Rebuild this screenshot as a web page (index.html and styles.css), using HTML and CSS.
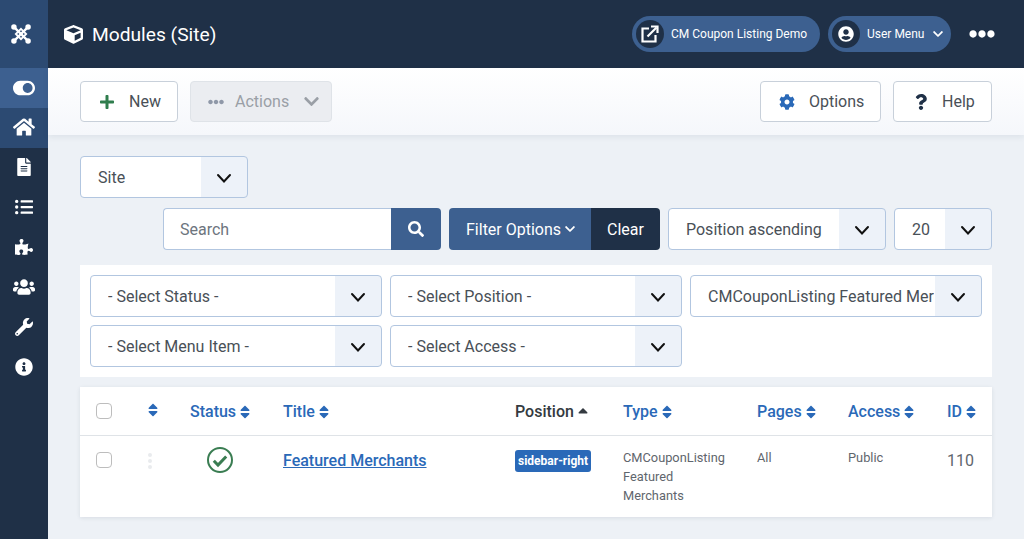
FILE: index.html
```html
<!DOCTYPE html>
<html lang="en">
<head>
  <meta charset="UTF-8">
  <title>Modules (Site)</title>
  <link rel="stylesheet" href="styles.css">
</head>
<body>
  <svg class="sprites" aria-hidden="true">
    <symbol id="i-toggle" viewBox="0 0 576 512"><path d="M384 64H192C86 64 0 150 0 256s86 192 192 192h192c106 0 192-86 192-192S490 64 384 64zm0 320c-70.8 0-128-57.3-128-128 0-70.8 57.3-128 128-128 70.8 0 128 57.3 128 128 0 70.8-57.3 128-128 128z"/></symbol>
    <symbol id="i-home" viewBox="0 0 576 512"><path d="M280.37 148.26L96 300.11V464a16 16 0 0 0 16 16l112.06-.29a16 16 0 0 0 15.92-16V368a16 16 0 0 1 16-16h64a16 16 0 0 1 16 16v95.64a16 16 0 0 0 16 16.05L464 480a16 16 0 0 0 16-16V300L295.67 148.26a12.19 12.19 0 0 0-15.3 0zM571.6 251.47L488 182.56V44.05a12 12 0 0 0-12-12h-56a12 12 0 0 0-12 12v72.61L318.47 43a48 48 0 0 0-61 0L4.34 251.47a12 12 0 0 0-1.6 16.9l25.5 31A12 12 0 0 0 45.15 301l235.22-193.74a12.19 12.19 0 0 1 15.3 0L530.9 301a12 12 0 0 0 16.9-1.6l25.5-31a12 12 0 0 0-1.7-16.93z"/></symbol>
    <symbol id="i-file" viewBox="0 0 384 512"><path d="M224 136V0H24C10.7 0 0 10.7 0 24v464c0 13.3 10.7 24 24 24h336c13.3 0 24-10.7 24-24V160H248c-13.2 0-24-10.8-24-24zm64 236c0 6.6-5.4 12-12 12H108c-6.6 0-12-5.4-12-12v-8c0-6.6 5.4-12 12-12h168c6.6 0 12 5.4 12 12v8zm0-64c0 6.6-5.4 12-12 12H108c-6.6 0-12-5.4-12-12v-8c0-6.6 5.4-12 12-12h168c6.6 0 12 5.4 12 12v8zm0-72v8c0 6.6-5.4 12-12 12H108c-6.6 0-12-5.4-12-12v-8c0-6.6 5.4-12 12-12h168c6.6 0 12 5.4 12 12zm96-114.1v6.1H256V0h6.1c6.4 0 12.5 2.5 17 7l97.9 98c4.5 4.5 7 10.6 7 16.9z"/></symbol>
    <symbol id="i-list" viewBox="0 0 512 512"><path d="M48 48a48 48 0 1 0 48 48 48 48 0 0 0-48-48zm0 160a48 48 0 1 0 48 48 48 48 0 0 0-48-48zm0 160a48 48 0 1 0 48 48 48 48 0 0 0-48-48zm448 16H176a16 16 0 0 0-16 16v32a16 16 0 0 0 16 16h320a16 16 0 0 0 16-16v-32a16 16 0 0 0-16-16zm0-320H176a16 16 0 0 0-16 16v32a16 16 0 0 0 16 16h320a16 16 0 0 0 16-16V80a16 16 0 0 0-16-16zm0 160H176a16 16 0 0 0-16 16v32a16 16 0 0 0 16 16h320a16 16 0 0 0 16-16v-32a16 16 0 0 0-16-16z"/></symbol>
    <symbol id="i-puzzle" viewBox="0 0 576 512"><path d="M519.442 288.651c-41.519 0-59.5 31.593-82.058 31.593C377.409 320.244 432 144 432 144s-196.288 80-196.288-3.297c0-35.827 36.288-46.25 36.288-85.985C272 19.216 243.885 0 210.539 0c-34.654 0-66.366 18.891-66.366 56.346 0 41.364 31.711 59.277 31.711 81.75C175.885 207.719 0 166.758 0 166.758v333.237s178.635 41.047 178.635-28.662c0-22.473-40-40.107-40-81.471 0-37.456 29.25-56.346 63.577-56.346 33.673 0 61.788 19.216 61.788 54.717 0 39.735-36.288 50.158-36.288 85.985 0 60.803 129.675 25.73 181.23 25.73 0 0-34.725-120.101 25.827-120.101 35.962 0 46.423 36.152 86.308 36.152C556.712 416 576 387.99 576 354.443c0-34.199-18.962-65.792-56.558-65.792z"/></symbol>
    <symbol id="i-users" viewBox="0 0 640 512"><path d="M96 224c35.3 0 64-28.7 64-64s-28.7-64-64-64-64 28.7-64 64 28.7 64 64 64zm448 0c35.3 0 64-28.7 64-64s-28.7-64-64-64-64 28.7-64 64 28.7 64 64 64zm32 32h-64c-17.6 0-33.5 7.1-45.1 18.6 40.3 22.1 68.9 62 75.1 109.4h66c17.7 0 32-14.3 32-32v-32c0-35.3-28.7-64-64-64zm-256 0c61.9 0 112-50.1 112-112S381.9 32 320 32 208 82.1 208 144s50.1 112 112 112zm76.8 32h-8.3c-20.8 10-43.9 16-68.5 16s-47.6-6-68.5-16h-8.3C179.6 288 128 339.6 128 403.2V432c0 26.5 21.5 48 48 48h288c26.5 0 48-21.5 48-48v-28.8c0-63.6-51.6-115.2-115.2-115.2zm-223.7-13.4C161.5 263.1 145.6 256 128 256H64c-35.3 0-64 28.7-64 64v32c0 17.7 14.3 32 32 32h65.9c6.3-47.4 34.9-87.3 75.2-109.4z"/></symbol>
    <symbol id="i-wrench" viewBox="0 0 512 512"><path d="M507.73 109.1c-2.24-9.03-13.54-12.09-20.12-5.51l-74.36 74.36-67.88-11.31-11.31-67.88 74.36-74.36c6.62-6.62 3.43-17.9-5.66-20.16-47.38-11.74-99.55.91-136.58 37.93-39.64 39.64-50.55 97.1-34.05 147.2L18.74 402.76c-24.99 24.99-24.99 65.51 0 90.5 24.99 24.99 65.51 24.99 90.5 0l213.21-213.21c50.12 16.71 107.47 5.68 147.37-34.22 37.07-37.07 49.7-89.32 37.91-136.73zM64 472c-13.25 0-24-10.75-24-24 0-13.26 10.75-24 24-24s24 10.74 24 24c0 13.25-10.75 24-24 24z"/></symbol>
    <symbol id="i-info" viewBox="0 0 512 512"><path d="M256 8C119.043 8 8 119.083 8 256c0 136.997 111.043 248 248 248s248-111.003 248-248C504 119.083 392.957 8 256 8zm0 110c23.196 0 42 18.804 42 42s-18.804 42-42 42-42-18.804-42-42 18.804-42 42-42zm56 254c0 6.627-5.373 12-12 12h-88c-6.627 0-12-5.373-12-12v-24c0-6.627 5.373-12 12-12h12v-64h-12c-6.627 0-12-5.373-12-12v-24c0-6.627 5.373-12 12-12h64c6.627 0 12 5.373 12 12v100h12c6.627 0 12 5.373 12 12v24z"/></symbol>
    <symbol id="i-cube" viewBox="0 0 512 512"><path d="M239.1 6.3l-208 78c-18.7 7-31.1 25-31.1 45v225.1c0 18.2 10.3 34.8 26.5 42.9l208 104c13.5 6.8 29.4 6.8 42.9 0l208-104c16.3-8.1 26.5-24.8 26.5-42.9V129.3c0-20-12.4-37.9-31.1-44.9l-208-78C262 2.2 250 2.2 239.1 6.3zM256 68.4l192 72v1.1l-192 78-192-78v-1.1l192-72zm32 356V275.5l160-65v133.9l-160 80z"/></symbol>
    <symbol id="i-user" viewBox="0 0 496 512"><path d="M248 8C111 8 0 119 0 256s111 248 248 248 248-111 248-248S385 8 248 8zm0 96c48.6 0 88 39.4 88 88s-39.4 88-88 88-88-39.4-88-88 39.4-88 88-88zm0 344c-58.7 0-111.3-26.6-146.5-68.2 18.8-35.4 55.6-59.8 98.5-59.8 2.4 0 4.8.4 7.1 1.1 13 4.2 26.6 6.9 40.9 6.9 14.3 0 28-2.7 40.9-6.9 2.3-.7 4.7-1.1 7.1-1.1 42.9 0 79.7 24.4 98.5 59.8C359.3 421.4 306.7 448 248 448z"/></symbol>
    <symbol id="i-dots" viewBox="0 0 512 512"><path d="M328 256c0 39.8-32.2 72-72 72s-72-32.2-72-72 32.2-72 72-72 72 32.2 72 72zm104-72c-39.8 0-72 32.2-72 72s32.2 72 72 72 72-32.2 72-72-32.2-72-72-72zm-352 0c-39.8 0-72 32.2-72 72s32.2 72 72 72 72-32.2 72-72-32.2-72-72-72z"/></symbol>
    <symbol id="i-plus" viewBox="0 0 448 512"><path d="M416 208H272V64c0-17.67-14.33-32-32-32h-32c-17.67 0-32 14.33-32 32v144H32c-17.67 0-32 14.33-32 32v32c0 17.67 14.33 32 32 32h144v144c0 17.67 14.33 32 32 32h32c17.67 0 32-14.33 32-32V304h144c17.67 0 32-14.33 32-32v-32c0-17.67-14.33-32-32-32z"/></symbol>
    <symbol id="i-cog" viewBox="0 0 512 512"><path d="M487.4 315.7l-42.6-24.6c4.3-23.2 4.3-47 0-70.2l42.6-24.6c4.9-2.8 7.1-8.6 5.5-14-11.1-35.6-30-67.8-54.7-94.6-3.8-4.1-10-5.1-14.8-2.3L380.8 110c-17.9-15.4-38.5-27.3-60.8-35.1V25.8c0-5.6-3.9-10.5-9.4-11.7-36.7-8.2-74.3-7.8-109.2 0-5.5 1.2-9.4 6.1-9.4 11.7V75c-22.2 7.9-42.8 19.8-60.8 35.1L88.7 85.5c-4.9-2.8-11-1.9-14.8 2.3-24.7 26.7-43.6 58.9-54.7 94.6-1.7 5.4.6 11.2 5.5 14L67.3 221c-4.3 23.2-4.3 47 0 70.2l-42.6 24.6c-4.9 2.8-7.1 8.6-5.5 14 11.1 35.6 30 67.8 54.7 94.6 3.8 4.1 10 5.1 14.8 2.3l42.6-24.6c17.9 15.4 38.5 27.3 60.8 35.1v49.2c0 5.6 3.9 10.5 9.4 11.7 36.7 8.2 74.3 7.8 109.2 0 5.5-1.2 9.4-6.1 9.4-11.7v-49.2c22.2-7.9 42.8-19.8 60.8-35.1l42.6 24.6c4.9 2.8 11 1.9 14.8-2.3 24.7-26.7 43.6-58.9 54.7-94.6 1.5-5.5-.7-11.3-5.6-14.1zM256 336c-44.1 0-80-35.9-80-80s35.9-80 80-80 80 35.9 80 80-35.9 80-80 80z"/></symbol>
    <symbol id="i-question" viewBox="0 0 384 512"><path d="M202.021 0C122.202 0 70.503 32.703 29.914 91.026c-7.363 10.58-5.093 25.086 5.178 32.874l43.138 32.709c10.373 7.865 25.132 6.026 33.253-4.148 25.049-31.381 43.63-49.449 82.757-49.449 30.764 0 68.816 19.799 68.816 49.631 0 22.552-18.617 34.134-48.993 51.164-35.423 19.86-82.299 44.576-82.299 106.405V320c0 13.255 10.745 24 24 24h72.471c13.255 0 24-10.745 24-24v-5.773c0-42.86 125.268-44.645 125.268-160.627C377.504 66.256 286.902 0 202.021 0zM192 373.459c-38.196 0-69.271 31.075-69.271 69.271 0 38.195 31.075 69.27 69.271 69.27s69.271-31.075 69.271-69.271-31.075-69.27-69.271-69.27z"/></symbol>
    <symbol id="i-search" viewBox="0 0 512 512"><path d="M505 442.7L405.3 343c-4.5-4.5-10.6-7-17-7H372c27.6-35.3 44-79.7 44-128C416 93.1 322.9 0 208 0S0 93.1 0 208s93.1 208 208 208c48.3 0 92.7-16.4 128-44v16.3c0 6.4 2.5 12.5 7 17l99.7 99.7c9.4 9.4 24.6 9.4 33.9 0l28.3-28.3c9.4-9.4 9.4-24.6.1-34zM208 336c-70.7 0-128-57.2-128-128 0-70.7 57.2-128 128-128 70.7 0 128 57.2 128 128 0 70.7-57.2 128-128 128z"/></symbol>
    <symbol id="i-chevron" viewBox="0 0 448 512"><path d="M207.029 381.476L12.686 187.132c-9.373-9.373-9.373-24.569 0-33.941l22.667-22.667c9.357-9.357 24.522-9.375 33.901-.04L224 284.505l154.745-154.021c9.379-9.335 24.544-9.317 33.901.04l22.667 22.667c9.373 9.373 9.373 24.569 0 33.941L240.971 381.476c-9.373 9.372-24.569 9.372-33.942 0z"/></symbol>
    <symbol id="i-caret" viewBox="0 0 16 18"><path d="M2 6 8 12.500 14 6" fill="none" stroke="currentColor" stroke-width="2" stroke-linecap="round"/></symbol>
    <symbol id="i-sort" viewBox="0 0 320 512"><path d="M41 288h238c21.4 0 32.1 25.9 17 41L177 448c-9.4 9.4-24.6 9.4-33.9 0L24 329c-15.1-15.1-4.4-41 17-41zm255-105L177 64c-9.4-9.4-24.6-9.4-33.9 0L24 183c-15.1 15.1-4.4 41 17 41h238c21.4 0 32.1-25.9 17-41z"/></symbol>
    <symbol id="i-sortup" viewBox="0 -112 320 512"><path d="M296 183L177 64c-9.4-9.4-24.6-9.4-33.9 0L24 183c-15.1 15.1-4.4 41 17 41h238c21.4 0 32.1-25.9 17-41z"/></symbol>
  </svg>

  <aside class="sidebar">
    <a class="brand" href="#">
      <svg class="brand-logo line-icon" viewBox="0 0 24 24" stroke="#fff">
        <path d="M4 4 20 20M20 4 4 20" stroke-width="2.800"/>
        <path d="M12 5.800 18.200 12 12 18.200 5.800 12z" stroke-width="2.200"/>
        <g fill="#fff" stroke="none">
          <circle cx="3.500" cy="3.500" r="3.300"/><circle cx="20.500" cy="3.500" r="3.300"/>
          <circle cx="3.500" cy="20.500" r="3.300"/><circle cx="20.500" cy="20.500" r="3.300"/>
        </g>
      </svg>
    </a>
    <nav class="side-nav">
      <a class="side-item toggle" href="#"><svg class="side-icon wide"><use href="#i-toggle"/></svg></a>
      <a class="side-item home" href="#"><svg class="side-icon wide"><use href="#i-home"/></svg></a>
      <a class="side-item" href="#"><svg class="side-icon"><use href="#i-file"/></svg></a>
      <a class="side-item" href="#"><svg class="side-icon"><use href="#i-list"/></svg></a>
      <a class="side-item" href="#"><svg class="side-icon"><use href="#i-puzzle"/></svg></a>
      <a class="side-item" href="#"><svg class="side-icon wide"><use href="#i-users"/></svg></a>
      <a class="side-item" href="#"><svg class="side-icon"><use href="#i-wrench"/></svg></a>
      <a class="side-item" href="#"><svg class="side-icon"><use href="#i-info"/></svg></a>
    </nav>
  </aside>

  <div class="page">
    <header class="topbar">
      <svg class="title-icon"><use href="#i-cube"/></svg>
      <h1 class="title">Modules (Site)</h1>
      <div class="pills">
        <a class="pill site-pill" href="#">
          <span class="pill-circle">
            <svg class="ext-icon line-icon" viewBox="0 0 18 18" stroke="#fff" stroke-width="2.200">
              <path d="M8 3.500H1.500V16.500H14.500V10"/>
              <path d="M6.500 11.500 15.500 2.500"/>
              <path d="M10 1.500h6.500v6.500"/>
            </svg>
          </span>
          <span>CM Coupon Listing Demo</span>
        </a>
        <a class="pill user-pill" href="#">
          <span class="pill-circle"><svg class="user-icon"><use href="#i-user"/></svg></span>
          <span>User Menu</span>
          <svg class="pill-chevron"><use href="#i-chevron"/></svg>
        </a>
      </div>
      <svg class="more"><use href="#i-dots"/></svg>
    </header>

    <div class="toolbar">
      <button class="btn new-btn"><svg class="btn-icon plus"><use href="#i-plus"/></svg>New</button>
      <button class="btn actions-btn" disabled>
        <svg class="dots-icon"><use href="#i-dots"/></svg>Actions<svg class="actions-chevron"><use href="#i-chevron"/></svg>
      </button>
      <span class="spacer"></span>
      <button class="btn options-btn"><svg class="btn-icon cog"><use href="#i-cog"/></svg>Options</button>
      <button class="btn help-btn"><svg class="btn-icon question"><use href="#i-question"/></svg>Help</button>
    </div>

    <main class="content">
      <div class="select site-select">
        <select><option>Site</option></select>
        <svg class="caret"><use href="#i-caret"/></svg>
      </div>

      <div class="search-row">
        <div class="search-group">
          <input class="search-input" type="text" placeholder="Search">
          <button class="search-btn"><svg class="search-icon"><use href="#i-search"/></svg></button>
        </div>
        <div class="filter-group">
          <button class="filter-btn">Filter Options<svg class="filter-chevron"><use href="#i-chevron"/></svg></button>
          <button class="clear-btn">Clear</button>
        </div>
        <div class="select order-select">
          <select><option>Position ascending</option></select>
          <svg class="caret"><use href="#i-caret"/></svg>
        </div>
        <div class="select limit-select">
          <select><option>20</option></select>
          <svg class="caret"><use href="#i-caret"/></svg>
        </div>
      </div>

      <div class="filters">
        <div class="select"><select><option>- Select Status -</option></select><svg class="caret"><use href="#i-caret"/></svg></div>
        <div class="select"><select><option>- Select Position -</option></select><svg class="caret"><use href="#i-caret"/></svg></div>
        <div class="select"><select><option>CMCouponListing Featured Merchants</option></select><svg class="caret"><use href="#i-caret"/></svg></div>
        <div class="select"><select><option>- Select Menu Item -</option></select><svg class="caret"><use href="#i-caret"/></svg></div>
        <div class="select"><select><option>- Select Access -</option></select><svg class="caret"><use href="#i-caret"/></svg></div>
      </div>

      <table class="modules">
        <colgroup>
          <col class="c-check"><col class="c-order"><col class="c-status"><col class="c-title">
          <col class="c-position"><col class="c-type"><col class="c-pages"><col class="c-access"><col class="c-id">
        </colgroup>
        <thead>
          <tr>
            <th><input class="check" type="checkbox"></th>
            <th><a href="#"><svg class="sort"><use href="#i-sort"/></svg></a></th>
            <th><a href="#">Status<svg class="sort"><use href="#i-sort"/></svg></a></th>
            <th><a href="#">Title<svg class="sort"><use href="#i-sort"/></svg></a></th>
            <th class="current">Position<svg class="sort"><use href="#i-sortup"/></svg></th>
            <th><a href="#">Type<svg class="sort"><use href="#i-sort"/></svg></a></th>
            <th><a href="#">Pages<svg class="sort"><use href="#i-sort"/></svg></a></th>
            <th><a href="#">Access<svg class="sort"><use href="#i-sort"/></svg></a></th>
            <th><a href="#">ID<svg class="sort"><use href="#i-sort"/></svg></a></th>
          </tr>
        </thead>
        <tbody>
          <tr>
            <td><input class="check" type="checkbox"></td>
            <td><span class="drag"><i></i><i></i><i></i></span></td>
            <td class="status-cell">
              <svg class="status-icon line-icon" viewBox="0 0 26 26" stroke="#3a7d52">
                <circle cx="13" cy="13" r="12" stroke-width="2"/>
                <path d="M6.800 13.800l4.200 4.200 8.200-8.500" stroke-width="3"/>
              </svg>
            </td>
            <td class="title-cell"><a href="#">Featured Merchants</a></td>
            <td><span class="badge">sidebar-right</span></td>
            <td class="small">CMCouponListing Featured Merchants</td>
            <td class="small">All</td>
            <td class="small">Public</td>
            <td class="id-cell">110</td>
          </tr>
        </tbody>
      </table>
    </main>
  </div>
</body>
</html>
```

FILE: styles.css
```css
* {
  box-sizing: border-box;
}
html, body {
  height: 100%;
}
body {
  margin: 0;
  display: flex;
  font-family: Roboto, "Liberation Sans", sans-serif;
  font-size: 16px;
  color: #495057;
  background: #edf1f6;
  overflow: hidden;
}
a {
  text-decoration: none;
}
svg {
  fill: currentColor;
  display: block;
  flex: none;
}
svg.line-icon {
  fill: none;
}
.sprites {
  display: none;
}

/* sidebar */
.sidebar {
  width: 48px;
  flex: none;
  background: #1f3047;
  color: #fff;
}
.brand {
  height: 68px;
  display: flex;
  align-items: center;
  justify-content: center;
  padding-right: 6px;
  background: #2c4a72;
}
.brand-logo {
  width: 20px;
  height: 20px;
}
.side-item {
  height: 40px;
  display: flex;
  align-items: center;
  justify-content: center;
  padding-bottom: 2px;
  color: #fff;
}
.side-item.toggle {
  background: #3d6090;
  padding-bottom: 0;
}
.side-item.home {
  background: #2c4a72;
}
.side-icon {
  width: 18px;
  height: 18px;
}
.side-icon.wide {
  width: 22px;
  height: 20px;
}

/* header */
.page {
  flex: 1;
  min-width: 0;
}
.topbar {
  height: 68px;
  display: flex;
  align-items: center;
  padding: 0 29px 0 16px;
  background: #1f3047;
  color: #fff;
}
.title-icon {
  width: 19px;
  height: 19px;
  margin-right: 9px;
}
.title {
  margin: 0;
  font-size: 19.2px;
  font-weight: 400;
}
.pills {
  margin-left: auto;
  display: flex;
  gap: 8px;
}
.pill {
  height: 36px;
  display: flex;
  align-items: center;
  padding: 0 0 0 4px;
  border-radius: 18px;
  background: #3d6090;
  color: #fff;
  font-size: 12px;
  white-space: nowrap;
}
.pill-circle {
  width: 28px;
  height: 28px;
  margin-right: 7px;
  display: flex;
  align-items: center;
  justify-content: center;
  border-radius: 50%;
  background: #1f3047;
}
.site-pill {
  width: 188px;
}
.user-pill {
  width: 123px;
}
.ext-icon {
  width: 18px;
  height: 18px;
}
.user-icon {
  width: 16px;
  height: 16px;
}
.pill-chevron {
  width: 10px;
  height: 12px;
  margin-left: 9px;
}
.more {
  width: 26px;
  height: 26px;
  margin-left: 18px;
}

/* toolbar */
.toolbar {
  height: 67px;
  display: flex;
  align-items: flex-start;
  gap: 12px;
  padding: 13px 32px 0;
  background: linear-gradient(#fff, #f5f7fb);
  box-shadow: 0 2px 6px rgba(31, 48, 71, 0.08);
}
.spacer {
  flex: 1;
}
.btn {
  height: 41px;
  display: flex;
  align-items: center;
  padding: 0;
  border: 1px solid #c8d0da;
  border-radius: 4px;
  background: #fff;
  color: #495057;
  font: inherit;
}
.new-btn {
  width: 98px;
  padding-left: 19px;
}
.actions-btn {
  width: 142px;
  padding-left: 17px;
  border-color: #dfe3e8;
  background: #ebedf1;
  color: #9a9fa6;
}
.options-btn {
  width: 121px;
  padding-left: 18px;
}
.help-btn {
  width: 99px;
  padding-left: 21px;
}
.btn-icon {
  height: 16px;
}
.plus {
  width: 14px;
  color: #2f7d4d;
  margin-right: 15px;
}
.cog {
  width: 16px;
  color: #2a69b8;
  margin-right: 14px;
}
.question {
  width: 12px;
  color: #1f3047;
  margin-right: 15px;
}
.dots-icon {
  width: 16px;
  height: 16px;
  margin-right: 11px;
  color: #8f98a8;
}
.actions-chevron {
  width: 15px;
  height: 17px;
  margin-left: 15px;
}

/* filter form */
.content {
  padding: 21px 32px 0;
}
.select {
  position: relative;
  height: 42px;
  min-width: 0;
}
.select select {
  width: 100%;
  height: 100%;
  padding: 0 47px 0 17px;
  appearance: none;
  border: 1px solid #b2c6e0;
  border-radius: 4px;
  background: linear-gradient(to left, #edf2f9 46px, #fff 46px);
  color: #495057;
  font: inherit;
}
.caret {
  position: absolute;
  top: 13px;
  right: 16px;
  width: 16px;
  height: 18px;
  color: #111;
  pointer-events: none;
}
.site-select {
  width: 168px;
  margin-bottom: 10px;
}
.search-row {
  display: flex;
  justify-content: flex-end;
  gap: 8px;
  margin-bottom: 15px;
}
.search-group, .filter-group {
  display: flex;
  height: 42px;
}
.search-input {
  width: 228px;
  padding: 0 16px;
  border: 1px solid #b2c6e0;
  border-right: 0;
  border-radius: 4px 0 0 4px;
  color: #495057;
  font: inherit;
}
.search-input::placeholder {
  color: #6d757e;
  opacity: 1;
}
.search-btn {
  width: 50px;
  display: flex;
  align-items: center;
  justify-content: center;
  border: 0;
  border-radius: 0 4px 4px 0;
  background: #3d6090;
  color: #fff;
}
.search-icon {
  width: 16px;
  height: 16px;
}
.filter-btn, .clear-btn {
  display: flex;
  align-items: center;
  border: 0;
  color: #fff;
  font: inherit;
}
.filter-btn {
  width: 142px;
  padding-left: 17px;
  background: #3d6090;
  border-radius: 4px 0 0 4px;
}
.clear-btn {
  width: 69px;
  justify-content: center;
  background: #1f3047;
  border-radius: 0 4px 4px 0;
}
.filter-chevron {
  width: 10px;
  height: 12px;
  margin-left: 4px;
}
.order-select {
  width: 218px;
}
.limit-select {
  width: 98px;
}
.filters {
  display: grid;
  grid-template-columns: repeat(3, 292px);
  gap: 8px;
  padding: 10px;
  margin-bottom: 10px;
  background: #fff;
}

/* list */
.modules {
  width: 912px;
  table-layout: fixed;
  border-collapse: collapse;
  background: #fff;
  box-shadow: 0 1px 4px rgba(31, 48, 71, 0.1);
}
.c-check { width: 52px; }
.c-order { width: 42px; }
.c-status { width: 93px; }
.c-title { width: 232px; }
.c-position { width: 108px; }
.c-type { width: 134px; }
.c-pages { width: 91px; }
.c-access { width: 99px; }
.c-id { width: 61px; }
.modules th {
  height: 48px;
  padding: 2px 0 0 16px;
  border-bottom: 1px solid #dfe3e7;
  text-align: left;
  font-weight: 500;
  white-space: nowrap;
}
.modules th a {
  display: inline-flex;
  align-items: center;
  color: #2a69b8;
}
.modules th.current {
  color: #343a40;
}
.sort {
  display: inline-block;
  width: 10px;
  height: 16px;
  margin-left: 4px;
  vertical-align: -2px;
}
.modules th:nth-child(2) .sort {
  margin-left: 0;
}
.modules td {
  height: 82px;
  padding: 12px 16px 0;
  vertical-align: top;
}
.check {
  display: block;
  width: 16px;
  height: 16px;
  margin: 0;
  appearance: none;
  border: 1px solid #bdbdbd;
  border-radius: 4px;
  background: #fff;
}
.modules th .check {
  margin-top: -2px;
}
.modules td:first-child .check {
  margin-top: 4px;
}
.drag {
  display: flex;
  flex-direction: column;
  gap: 2px;
  width: 5px;
  margin-top: 5px;
}
.drag i {
  width: 4px;
  height: 4px;
  border-radius: 50%;
  background: #e9ebee;
}
.modules .status-cell {
  padding: 11px 0 0 33px;
}
.status-icon {
  width: 26px;
  height: 26px;
}
.title-cell {
  padding-top: 15px !important;
  font-weight: 500;
  line-height: 19px;
}
.title-cell a {
  color: #2a69b8;
  text-decoration: underline;
}
.badge {
  display: inline-block;
  margin-top: 2px;
  padding: 0 3px;
  height: 22px;
  border-radius: 3px;
  background: #2a69b8;
  color: #fff;
  font-size: 12px;
  font-weight: 700;
  line-height: 22px;
  white-space: nowrap;
}
.modules .small {
  padding-top: 12px;
  padding-right: 8px;
  font-size: 12.8px;
  line-height: 19px;
  color: #5f666d;
}
.modules .id-cell {
  padding: 15px 0 0 16px;
  line-height: 19px;
  color: #5f666d;
}
```
